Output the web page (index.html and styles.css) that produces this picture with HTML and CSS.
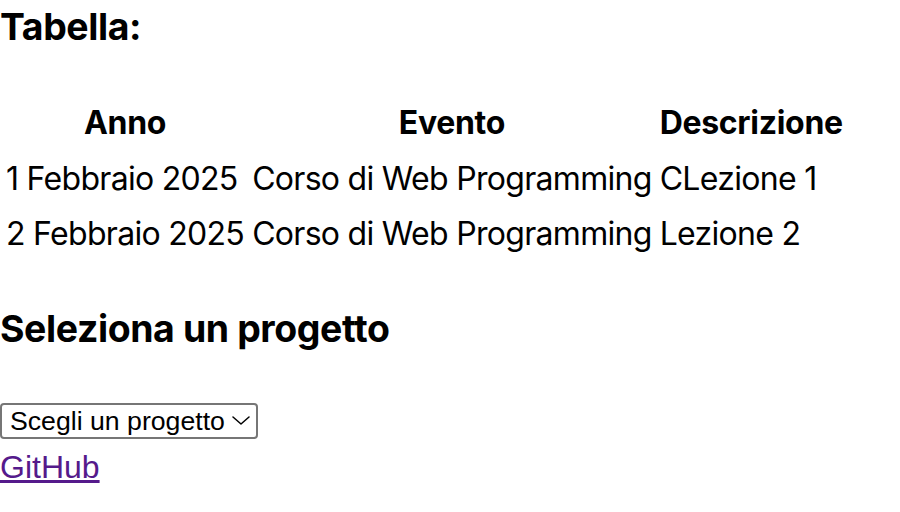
FILE: index.html
```html
<!DOCTYPE html>
<html lang="it">
<head>
<meta charset="utf-8">
<title>Tabella</title>
<link rel="stylesheet" href="styles.css">
</head>
<body>
<h3 class="title">Tabella:</h3>
<table class="events">
  <thead>
    <tr><th>Anno</th><th>Evento</th><th>Descrizione</th></tr>
  </thead>
  <tbody>
    <tr><td>1 Febbraio 2025</td><td>Corso di Web Programming</td><td>CLezione 1</td></tr>
    <tr><td>2 Febbraio 2025</td><td>Corso di Web Programming</td><td>Lezione 2</td></tr>
  </tbody>
</table>
<h3 class="section">Seleziona un progetto</h3>
<div class="select-row">
  <span class="select-wrap">
    <select class="picker">
      <option>Scegli un progetto</option>
    </select>
    <svg class="chev" width="18" height="9" viewBox="0 0 18 9"><path d="M1 1 L9 8 L17 1" fill="none" stroke="#000" stroke-width="1.5" stroke-linecap="round" stroke-linejoin="round"/></svg>
  </span>
</div>
<a class="gh" href="#">GitHub</a>
</body>
</html>
```
FILE: styles.css
```css
html, body {
  margin: 0;
  padding: 0;
  background: #fff;
}
body {
  font-family: "Liberation Sans", Arial, sans-serif;
  font-size: 32px;
  color: #000;
}
.title, .section {
  font-family: Inter, "Noto Sans", sans-serif;
  font-size: 37.44px;
  font-weight: 700;
  line-height: 1.2;
  letter-spacing: -0.4px;
  margin: 0;
}
.title {
  padding-top: 5px;
  margin-bottom: 44px;
}
.section {
  margin-top: 43px;
  margin-bottom: 51px;
}
.events {
  border-spacing: 4px;
  font-family: Inter, "Noto Sans", sans-serif;
  font-size: 32px;
  letter-spacing: -0.7px;
}
.events th, .events td {
  padding: 6.5px 2px;
  line-height: 1.2;
}
.events th {
  font-weight: 700;
  text-align: center;
  letter-spacing: -0.3px;
}
.events td {
  text-align: left;
}
.select-row {
  line-height: 1;
  display: flex;
}
.select-wrap {
  position: relative;
  display: inline-flex;
}
.picker {
  -webkit-appearance: none;
  appearance: none;
  font-family: "Liberation Sans", Arial, sans-serif;
  font-size: 26.67px;
  color: #000;
  background: #fff;
  border: 2px solid #767676;
  border-radius: 4px;
  width: 258px;
  height: 36px;
  padding: 0 30px 0 8px;
  margin: 0;
}
.chev {
  position: absolute;
  right: 8px;
  top: 13px;
  pointer-events: none;
}
.gh {
  display: inline-block;
  margin-top: 10px;
  color: #551a8b;
  text-decoration: underline;
  line-height: 1.15;
}
```
